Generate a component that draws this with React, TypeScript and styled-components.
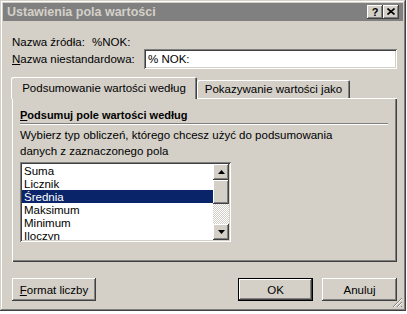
import React from 'react';
import styled, { createGlobalStyle } from 'styled-components';

const GlobalStyle = createGlobalStyle`
  html, body {
    margin: 0;
    padding: 0;
    background: #ffffff;
  }
  body {
    font-family: 'Liberation Sans', Arial, sans-serif;
    font-size: 11.5px;
    color: #000000;
  }
`;

const raised = `
  box-shadow: inset -1px -1px #404040, inset 1px 1px #ffffff,
    inset -2px -2px #808080, inset 2px 2px #d4d0c8;
`;

const sunken = `
  box-shadow: inset 1px 1px #808080, inset -1px -1px #ffffff,
    inset 2px 2px #404040, inset -2px -2px #d4d0c8;
`;

const Window = styled.div`
  position: relative;
  box-sizing: border-box;
  width: 406px;
  height: 311px;
  padding: 3px;
  background: #d4d0c8;
  box-shadow: inset -1px -1px #404040, inset 1px 1px #d4d0c8,
    inset -2px -2px #808080, inset 2px 2px #ffffff;
  display: flex;
  flex-direction: column;
`;

const TitleBar = styled.div`
  height: 18px;
  background: #808080;
  display: flex;
  align-items: center;
  padding: 0 4px 0 4px;
  color: #d4d0c8;
  font-weight: bold;
  font-size: 12.5px;
`;

const TitleText = styled.span`
  flex: 1;
`;

const CaptionButton = styled.div`
  box-sizing: border-box;
  width: 16px;
  height: 14px;
  background: #d4d0c8;
  ${raised}
  display: flex;
  align-items: center;
  justify-content: center;
  color: #000000;
  font-size: 11px;
  font-weight: bold;
  padding-bottom: 1px;
`;

const Body = styled.div`
  flex: 1;
  display: flex;
  flex-direction: column;
  padding: 0 6px 0 9px;
`;

const SourceRow = styled.div`
  margin-top: 14px;
  height: 14px;
  line-height: 14px;
  display: flex;
`;

const SourceLabel = styled.span`
  width: 80px;
`;

const NameRow = styled.div`
  height: 20px;
  display: flex;
  align-items: center;
`;

const NameLabel = styled.label`
  width: 132px;
`;

const TextInput = styled.div`
  box-sizing: border-box;
  flex: 1;
  height: 20px;
  background: #ffffff;
  ${sunken}
  padding-left: 4px;
  display: flex;
  align-items: center;
`;

const TabStrip = styled.div`
  margin-top: 8px;
  margin-left: -1px;
  height: 22px;
  margin-bottom: -1px;
  display: flex;
  align-items: flex-start;
  position: relative;
  z-index: 1;
`;

const Tab = styled.div<{ $active?: boolean; $width: number }>`
  box-sizing: border-box;
  width: ${(p) => p.$width}px;
  height: ${(p) => (p.$active ? 22 : 18)}px;
  margin-top: ${(p) => (p.$active ? 0 : 3)}px;
  background: #d4d0c8;
  border-radius: 2px 2px 0 0;
  box-shadow: inset 1px 1px #ffffff, inset -1px 0 #404040, inset -2px 0 #808080;
  display: flex;
  align-items: center;
  justify-content: center;
  padding-bottom: ${(p) => (p.$active ? 1 : 0)}px;
`;

const Panel = styled.div`
  box-sizing: border-box;
  height: 164px;
  box-shadow: inset 1px 1px #ffffff, inset -1px -1px #404040, inset -2px -2px #808080;
  padding: 0 9px 0 8px;
  display: flex;
  flex-direction: column;
`;

const GroupTitle = styled.div`
  margin-top: 10px;
  height: 14px;
  line-height: 14px;
  font-weight: bold;
  font-size: 11px;
`;

const Separator = styled.div`
  margin-top: 1px;
  height: 0;
  border-top: 1px solid #808080;
  border-bottom: 1px solid #ffffff;
`;

const Description = styled.div`
  margin-top: 2px;
  line-height: 16px;
`;

const ListBox = styled.div`
  box-sizing: border-box;
  margin-top: 3px;
  width: 211px;
  height: 80px;
  background: #ffffff;
  ${sunken}
  padding: 2px;
  display: flex;
`;

const Items = styled.div`
  flex: 1;
  overflow: hidden;
`;

const Item = styled.div<{ $selected?: boolean }>`
  height: 13px;
  box-sizing: border-box;
  padding: 1px 0 0 2px;
  line-height: 12px;
  background: ${(p) => (p.$selected ? '#0a246a' : 'transparent')};
  color: ${(p) => (p.$selected ? '#ffffff' : '#000000')};
`;

const ScrollBar = styled.div`
  width: 16px;
  display: flex;
  flex-direction: column;
`;

const ScrollButton = styled.div`
  box-sizing: border-box;
  height: 16px;
  background: #d4d0c8;
  ${raised}
  display: flex;
  align-items: center;
  justify-content: center;
`;

const Thumb = styled.div`
  box-sizing: border-box;
  height: 24px;
  background: #d4d0c8;
  ${raised}
`;

const Track = styled.div`
  flex: 1;
  background: repeating-conic-gradient(#ffffff 0 25%, #d4d0c8 0 50%) 0 0 / 2px 2px;
`;

const Footer = styled.div`
  margin-top: 16px;
  display: flex;
  height: 23px;
`;

const Spacer = styled.div`
  flex: 1;
`;

const Button = styled.div<{ $width: number; $default?: boolean }>`
  box-sizing: border-box;
  width: ${(p) => p.$width}px;
  height: 23px;
  margin-left: ${(p) => (p.$default ? 0 : 9)}px;
  background: #d4d0c8;
  display: flex;
  align-items: center;
  justify-content: center;
  border: ${(p) => (p.$default ? '1px solid #000000' : 'none')};
  ${raised}
  &:first-child {
    margin-left: 0;
  }
`;

const Grip = styled.svg`
  position: absolute;
  right: 3px;
  bottom: 3px;
`;

const Arrow: React.FC<{ down?: boolean }> = ({ down }) => (
  <svg width="7" height="4" viewBox="0 0 7 4">
    <polygon points={down ? '0,0 7,0 3.5,4' : '0,4 7,4 3.5,0'} fill="#000" />
  </svg>
);

const items = ['Suma', 'Licznik', 'Średnia', 'Maksimum', 'Minimum', 'Iloczyn'];

export default function App() {
  return (
    <>
      <GlobalStyle />
      <Window>
        <TitleBar>
          <TitleText>Ustawienia pola wartości</TitleText>
          <CaptionButton>?</CaptionButton>
          <CaptionButton>
            <svg width="8" height="7" viewBox="0 0 8 7">
              <path d="M0.5 0.5 L7.5 6.5 M7.5 0.5 L0.5 6.5" stroke="#000" strokeWidth="1.6" />
            </svg>
          </CaptionButton>
        </TitleBar>
        <Body>
          <SourceRow>
            <SourceLabel>Nazwa źródła:</SourceLabel>
            <span>%NOK:</span>
          </SourceRow>
          <NameRow>
            <NameLabel>
              <u>N</u>azwa niestandardowa:
            </NameLabel>
            <TextInput>% NOK:</TextInput>
          </NameRow>
          <TabStrip>
            <Tab $active $width={186}>Podsumowanie wartości według</Tab>
            <Tab $width={153}>Pokazywanie wartości jako</Tab>
          </TabStrip>
          <Panel>
            <GroupTitle>
              <u>P</u>odsumuj pole wartości według
            </GroupTitle>
            <Separator />
            <Description>
              Wybierz typ obliczeń, którego chcesz użyć do podsumowania
              <br />
              danych z zaznaczonego pola
            </Description>
            <ListBox>
              <Items>
                {items.map((it) => (
                  <Item key={it} $selected={it === 'Średnia'}>
                    {it}
                  </Item>
                ))}
              </Items>
              <ScrollBar>
                <ScrollButton>
                  <Arrow />
                </ScrollButton>
                <Thumb />
                <Track />
                <ScrollButton>
                  <Arrow down />
                </ScrollButton>
              </ScrollBar>
            </ListBox>
          </Panel>
          <Footer>
            <Button $width={84}>
              <span>
                <u>F</u>ormat liczby
              </span>
            </Button>
            <Spacer />
            <Button $width={75} $default>
              OK
            </Button>
            <Button $width={75}>Anuluj</Button>
          </Footer>
        </Body>
        <Grip width="11" height="11" viewBox="0 0 11 11">
          <path d="M10 1 L1 10 M10 5 L5 10 M10 9 L9 10" stroke="#808080" strokeWidth="1" />
          <path d="M10 2 L2 10 M10 6 L6 10" stroke="#ffffff" strokeWidth="1" />
        </Grip>
      </Window>
    </>
  );
}
